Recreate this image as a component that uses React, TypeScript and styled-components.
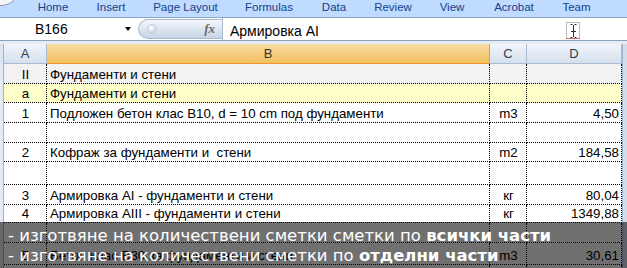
import styled, { createGlobalStyle } from "styled-components";

const GlobalStyle = createGlobalStyle`
  html, body {
    margin: 0;
    padding: 0;
    background: #ffffff;
  }
  body {
    width: 627px;
    height: 268px;
    overflow: hidden;
  }
`;

// strip | A | B | C | D | edge
const COLS = "4px 43px 443px 37px 95px 5px";

const tabs = [
  { label: "Home", width: 58 },
  { label: "Insert", width: 58 },
  { label: "Page Layout", width: 91 },
  { label: "Formulas", width: 76 },
  { label: "Data", width: 54 },
  { label: "Review", width: 64 },
  { label: "View", width: 54 },
  { label: "Acrobat", width: 70 },
  { label: "Team", width: 55 },
];

type Row = {
  h: number;
  bg?: string;
  a?: string;
  b?: string;
  c?: string;
  d?: string;
};

const rows: Row[] = [
  { h: 20, bg: "#f2f2f2", a: "II", b: "Фундаменти и стени" },
  { h: 19, bg: "#ffffcc", a: "a", b: "Фундаменти и стени" },
  { h: 20, a: "1", b: "Подложен бетон клас B10, d = 10 cm под фундаменти", c: "m3", d: "4,50" },
  { h: 20 },
  { h: 19, a: "2", b: "Кофраж за фундаменти и  стени", c: "m2", d: "184,58" },
  { h: 23 },
  { h: 20, a: "3", b: "Армировка AI - фундаменти и стени", c: "кг", d: "80,04" },
  { h: 18, a: "4", b: "Армировка AIII - фундаменти и стени", c: "кг", d: "1349,88" },
  { h: 20 },
  { h: 22, a: "5", b: "Бетон клас B30 за фундаменти и стени", c: "m3", d: "30,61" },
  { h: 20 },
];

export default function App() {
  return (
    <>
      <GlobalStyle />
      <Window>
        <OfficeButton />
        <TabBar>
          {tabs.map((t) => (
            <Tab key={t.label} $width={t.width}>
              {t.label}
            </Tab>
          ))}
        </TabBar>

        <FormulaBar>
          <NameBox>
            <span>B166</span>
            <DropArrow />
          </NameBox>
          <FxPill>
            <PillKnob />
            <Fx>fx</Fx>
          </FxPill>
          <FormulaInput>
            <span>Армировка AI</span>
            <svg width="15" height="18" viewBox="0 0 15 18">
              <rect x="0.5" y="0.5" width="13" height="16" fill="none" stroke="#777" strokeDasharray="1 1" />
              <path d="M4.5 2.5h2M8.5 2.5h2M7.5 3v12M4.5 15.5h2M8.5 15.5h2M5 9.5h5" stroke="#333" fill="none" />
              <path d="M0.5 16.5h13" stroke="#e02020" strokeDasharray="1 1" />
            </svg>
          </FormulaInput>
        </FormulaBar>
        <BarGap />

        <HeaderRow>
          <HeaderStrip />
          <HeaderCell>A</HeaderCell>
          <HeaderCell $selected>B</HeaderCell>
          <HeaderCell>C</HeaderCell>
          <HeaderCell>D</HeaderCell>
          <EdgeCell />
        </HeaderRow>

        {rows.map((r, i) => (
          <BodyRow key={i} $h={r.h} $bg={r.bg}>
            <RowStrip />
            <Cell $align="center">{r.a}</Cell>
            <Cell>{r.b}</Cell>
            <Cell $align="center">{r.c}</Cell>
            <Cell $align="right">{r.d}</Cell>
            <EdgeCell />
          </BodyRow>
        ))}

        <Caption>
          <CaptionLine>
            - изготвяне на количествени сметки сметки по <b>всички части</b>
          </CaptionLine>
          <CaptionLine>
            - изготвяне на количествени сметки по <b>отделни части</b>
          </CaptionLine>
        </Caption>
      </Window>
    </>
  );
}

const Window = styled.div`
  position: relative;
  width: 627px;
  height: 268px;
  overflow: hidden;
  background: #ffffff;
  font-family: "Liberation Sans", Arial, sans-serif;
`;

const OfficeButton = styled.div`
  position: absolute;
  left: -18px;
  top: -32px;
  width: 36px;
  height: 36px;
  border-radius: 50%;
  background: #f4f6f9;
  border: 1px solid #8c97a8;
`;

const TabBar = styled.div`
  display: flex;
  height: 17px;
  padding-left: 24px;
  background: #bfdbff;
  border-bottom: 1px solid #8da7c9;
`;

const Tab = styled.div<{ $width: number }>`
  width: ${(p) => p.$width}px;
  text-align: center;
  color: #15428b;
  font-size: 11.5px;
  line-height: 15px;
`;

const FormulaBar = styled.div`
  display: flex;
  height: 22px;
  background: #ffffff;
  border-bottom: 1px solid #8aa0bd;
`;

const NameBox = styled.div`
  width: 135px;
  display: flex;
  align-items: center;
  justify-content: space-between;
  padding: 0 4px 0 35px;
  box-sizing: border-box;
  font-size: 14px;
  color: #000;
`;

const DropArrow = styled.div`
  width: 0;
  height: 0;
  border-left: 3.5px solid transparent;
  border-right: 3.5px solid transparent;
  border-top: 4px solid #000;
`;

const FxPill = styled.div`
  margin: 1px 0 1px 3px;
  width: 84px;
  display: flex;
  align-items: center;
  justify-content: space-between;
  padding: 0 7px 0 8px;
  box-sizing: border-box;
  border: 1px solid #a9bbd3;
  border-right: none;
  border-radius: 10px 0 0 10px;
  background: linear-gradient(#f5f8fc, #dfe7f1 45%, #c8d5e6);
`;

const PillKnob = styled.div`
  width: 8px;
  height: 8px;
  border-radius: 50%;
  background: radial-gradient(circle at 40% 35%, #ffffff, #b8c4d3);
  border: 1px solid #c5cfdc;
`;

const Fx = styled.span`
  font-family: "Liberation Serif", serif;
  font-style: italic;
  font-weight: bold;
  font-size: 13px;
  color: #6a6a6a;
`;

const FormulaInput = styled.div`
  flex: 1;
  display: flex;
  align-items: center;
  justify-content: space-between;
  padding: 4px 46px 0 7px;
  border-left: 1px solid #a9bbd3;
  font-size: 14px;
  color: #000;
`;

const BarGap = styled.div`
  height: 3px;
  background: #e8edf4;
`;

const HeaderRow = styled.div`
  display: grid;
  grid-template-columns: ${COLS};
  height: 20px;
`;

const HeaderStrip = styled.div`
  background: #dce5f1;
  border-right: 1px solid #9eb3cd;
`;

const HeaderCell = styled.div<{ $selected?: boolean }>`
  display: flex;
  align-items: center;
  justify-content: center;
  font-size: 13px;
  color: ${(p) => (p.$selected ? "#3b3422" : "#2f3e52")};
  background: ${(p) =>
    p.$selected
      ? "linear-gradient(#f9dba4, #f5cd80 50%, #f1c15f)"
      : "linear-gradient(#f2f5fa, #e3eaf4 50%, #d6e0ec)"};
  border-right: 1px solid ${(p) => (p.$selected ? "#f29536" : "#a9bcd4")};
  border-bottom: 1px solid ${(p) => (p.$selected ? "#f29536" : "#a9bcd4")};
`;

const EdgeCell = styled.div`
  background: #d2dcea;
  border-left: 1px solid #9eb3cd;
`;

const BodyRow = styled.div<{ $h: number; $bg?: string }>`
  display: grid;
  grid-template-columns: ${COLS};
  height: ${(p) => p.$h}px;
  background: ${(p) => p.$bg ?? "#ffffff"};
`;

const RowStrip = styled.div`
  background: #e4ebf5;
  border-right: 1px solid #9eb3cd;
`;

const Cell = styled.div<{ $align?: "left" | "center" | "right" }>`
  display: flex;
  align-items: flex-end;
  justify-content: ${(p) =>
    p.$align === "center" ? "center" : p.$align === "right" ? "flex-end" : "flex-start"};
  padding: 0 2px 0 3px;
  box-sizing: border-box;
  overflow: hidden;
  white-space: pre;
  font-size: 13.3px;
  line-height: 16px;
  color: #000;
  border-right: 1px dotted #000;
  border-bottom: 1px dotted #000;
`;

const Caption = styled.div`
  position: absolute;
  left: 0;
  right: 0;
  top: 222px;
  bottom: 0;
  padding: 4px 0 0 8px;
  background: rgba(0, 0, 0, 0.56);
  color: #ffffff;
  font-family: "DejaVu Sans", Verdana, sans-serif;
  font-size: 16.5px;
`;

const CaptionLine = styled.div`
  height: 20px;
  line-height: 20px;
  white-space: nowrap;
`;
